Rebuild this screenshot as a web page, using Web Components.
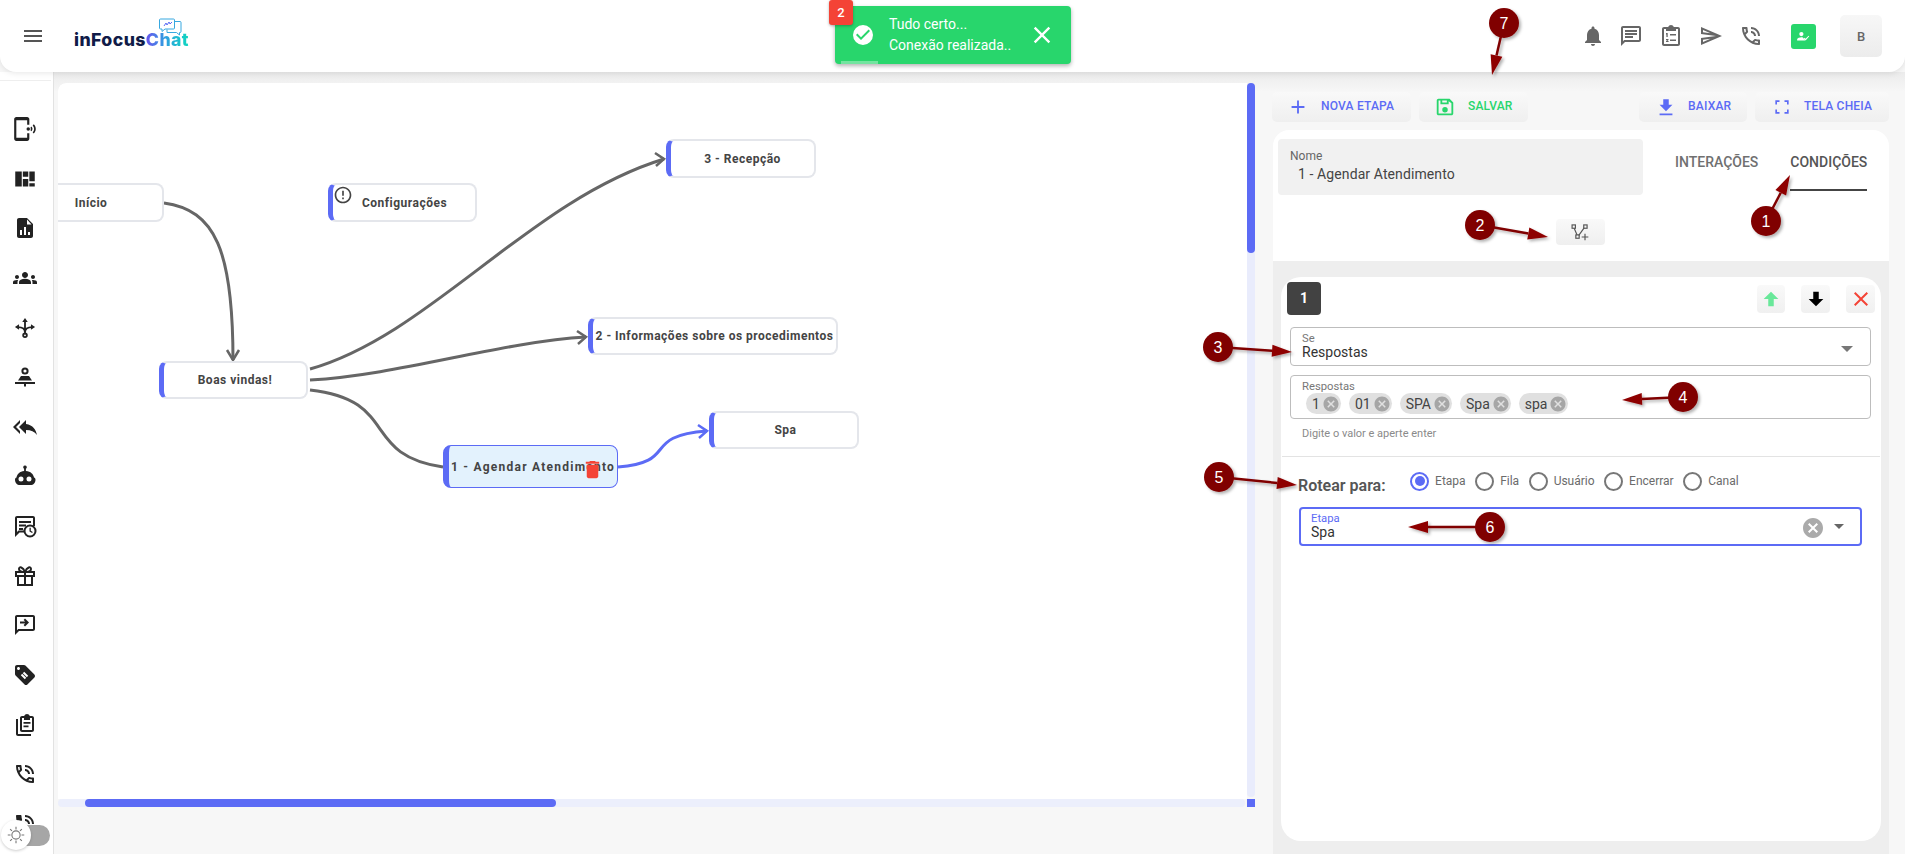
<!DOCTYPE html>
<html lang="pt-BR"><head><meta charset="utf-8"><title>inFocusChat</title>
<style>
html,body{margin:0;height:854px;overflow:hidden;background:#f7f7f7;font-family:Roboto,"Liberation Sans",sans-serif}
app-shell{display:block}
</style></head><body>
<app-shell>
  <top-bar slot="top"></top-bar>
  <side-nav slot="side"></side-nav>
  <flow-canvas slot="canvas">
    <flow-node x="15" y="183" w="149" h="39" plain>Início</flow-node>
    <flow-node x="328" y="183" w="149" h="39" warn>Configurações</flow-node>
    <flow-node x="666" y="139" w="150" h="39">3 - Recepção</flow-node>
    <flow-node x="588" y="317" w="250" h="38">2 - Informações sobre os procedimentos</flow-node>
    <flow-node x="159" y="361" w="149" h="38">Boas vindas!</flow-node>
    <flow-node x="709" y="411" w="150" h="38">Spa</flow-node>
    <flow-node x="443" y="445" w="175" h="43" active>1 - Agendar Atendimento</flow-node>
  </flow-canvas>
  <step-panel slot="panel"></step-panel>
  <toast-note slot="toast"></toast-note>
  <anno-layer slot="anno"></anno-layer>
</app-shell>
<script>
const PRIMARY='#5c6bf5';
const I={
menu:'<path d="M3 18h18v-2H3v2zm0-5h18v-2H3v2zm0-7v2h18V6H3z"/>',
phonering:'<path d="M20.1 7.7l-1 1c1.8 1.8 1.8 4.6 0 6.5l1 1c2.5-2.3 2.5-6.1 0-8.5zM18 9.8l-1 1c.5.7.5 1.6 0 2.3l1 1c1.2-1.2 1.2-3 0-4.3zM14 1H4c-1.1 0-2 .9-2 2v18c0 1.1.9 2 2 2h10c1.1 0 2-.9 2-2v-5h-2v4H4V4h10v4h2V3c0-1.1-.9-2-2-2z"/><circle cx="15" cy="12" r="1.6"/>',
quilt:'<path d="M3 5h6v14H3zM10 5h5v5h-5zM10 12h5v7h-5zM16 5h5v9h-5zM16 16h5v3h-5z"/>',
report:'<path fill-rule="evenodd" d="M14 2H6c-1.1 0-2 .9-2 2v16c0 1.1.9 2 2 2h12c1.1 0 2-.9 2-2V8l-6-6zM7 19v-5h2v5H7zm4 0v-8h2v8h-2zm4 0v-3h2v3h-2zM14 8.5V3.5L18.500 8.500H14z"/>',
groups:'<path d="M12 12.75c1.63 0 3.07.39 4.24.9 1.08.48 1.76 1.56 1.76 2.73V18H6v-1.61c0-1.18.68-2.26 1.76-2.73 1.17-.52 2.61-.91 4.24-.91zM4 13c1.1 0 2-.9 2-2s-.9-2-2-2-2 .9-2 2 .9 2 2 2zm1.130 1.100c-.37-.06-.74-.1-1.130-.1-.99 0-1.930.21-2.780.58C.48 14.900 0 15.620 0 16.430V18h4.500v-1.610c0-.83.23-1.610.63-2.290zM20 13c1.100 0 2-.9 2-2s-.9-2-2-2-2 .9-2 2 .9 2 2 2zm4 3.430c0-.81-.48-1.530-1.220-1.850-.85-.37-1.790-.58-2.780-.58-.39 0-.76.04-1.130.1.4.68.63 1.460.63 2.290V18H24v-1.570zM12 6c1.660 0 3 1.340 3 3s-1.340 3-3 3-3-1.340-3-3 1.340-3 3-3z"/>',
fork:'<g fill="none" stroke="currentColor" stroke-width="2"><circle cx="12" cy="20" r="2"/><path d="M12 18V5M12 17c0-5-3-6-8-6M12 17c0-5 3-6 8-6"/></g><path d="M12 1l3 4.500H9zM1 11l4.500-3v6zM23 11l-4.500-3v6z"/>',
seat:'<g fill="none" stroke="currentColor" stroke-width="2"><circle cx="12" cy="6" r="2.600"/></g><path d="M8 11h8l3 4.500H5zM2 17h20v2H13v2.500h-2V19H2z"/>',
replyall:'<path d="M7 8V5l-7 7 7 7v-3l-4-4 4-4zm6 1V5l-7 7 7 7v-4.100c5 0 8.500 1.600 11 5.100-1-5-4-10-11-11z"/>',
robot:'<path fill-rule="evenodd" d="M12 1.500a1.800 1.800 0 0 1 .9 3.360V7c4.800.4 7.600 3.200 8.100 6.500.9.300 1.500 1.100 1.500 2.200 0 3-2 5.300-5 5.300H7c-3 0-5-2.300-5-5.300 0-1.100.6-1.900 1.500-2.200.5-3.300 3.300-6.100 7.600-6.500V4.860A1.800 1.800 0 0 1 12 1.500zM8 12.500a2.500 2.500 0 1 0 0 5 2.500 2.500 0 0 0 0-5zm8 0a2.500 2.500 0 1 0 0 5 2.500 2.500 0 0 0 0-5z"/>',
sched:'<path fill-rule="evenodd" d="M4 2h16c1.100 0 2 .9 2 2v8h-2V4H4v14l1.500-1.500H11v2H6.500L2 23V4c0-1.100.9-2 2-2zM6 7h12v2H6zM6 10.500h7v2H6zM6 14h4v2H6z"/><circle cx="17" cy="17" r="5.500" fill="none" stroke="currentColor" stroke-width="2"/><path d="M16.500 13.800h1.300v3l2 1.300-.7 1-2.600-1.700z"/>',
gift:'<g fill="none" stroke="currentColor" stroke-width="2"><path d="M3 8h18v4H3zM5 12v9h14v-9M12 8v13M12 8C10 3 6 2 6 5c0 2 3 3 6 3 3 0 6-1 6-3 0-3-4-2-6 3z"/></g>',
inbox:'<path d="M20 2H4c-1.100 0-2 .9-2 2v18l4-4h14c1.100 0 2-.9 2-2V4c0-1.100-.9-2-2-2zm0 14H5.170L4 17.170V4h16v12z"/><path d="M12 5.500l-1.400 1.400L12.200 8.500H7v2h5.200l-1.600 1.600L12 13.500l4-4z"/>',
tag:'<path fill-rule="evenodd" d="M21.410 11.580l-9-9C12.050 2.220 11.550 2 11 2H4c-1.100 0-2 .9-2 2v7c0 .55.22 1.050.59 1.420l9 9c.36.36.86.58 1.410.58.55 0 1.050-.22 1.410-.59l7-7c.37-.36.59-.86.59-1.410 0-.55-.23-1.060-.59-1.420zM5.500 7C4.670 7 4 6.330 4 5.500S4.670 4 5.500 4 7 4.670 7 5.500 6.330 7 5.500 7zM9.800 10.200l1.400-1.400 4 4-1.400 1.400zM7.800 12.200l1.400-1.400 4 4-1.400 1.400z"/>',
clips:'<path fill-rule="evenodd" d="M3 6h2v15h13v2H5c-1.100 0-2-.9-2-2zM9 3h2.200c.4-1.200 1.500-2 2.800-2s2.400.8 2.800 2H19c1.100 0 2 .9 2 2v12c0 1.100-.9 2-2 2H9c-1.100 0-2-.9-2-2V5c0-1.100.9-2 2-2zm0 2v12h10V5h-2v2h-6V5zM10.500 9h7v1.800h-7zM10.500 12.500h5v1.800h-5z"/>',
talk:'<path d="M15 12h2c0-2.760-2.240-5-5-5v2c1.660 0 3 1.340 3 3zm4 0h2c0-4.970-4.030-9-9-9v2c3.870 0 7 3.130 7 7zm1 3.500c-1.250 0-2.450-.2-3.570-.57-.1-.03-.21-.05-.31-.05-.26 0-.51.1-.71.29l-2.200 2.200c-2.830-1.440-5.150-3.750-6.590-6.590l2.200-2.210c.28-.26.36-.65.25-1C8.700 6.450 8.500 5.250 8.500 4c0-.55-.45-1-1-1H4c-.55 0-1 .45-1 1 0 9.390 7.610 17 17 17 .55 0 1-.45 1-1v-3.500c0-.55-.45-1-1-1zM5.030 5h1.500c.07.88.22 1.750.45 2.580l-1.200 1.210c-.4-1.210-.66-2.470-.75-3.790zM19 18.970c-1.320-.09-2.600-.35-3.800-.76l1.200-1.200c.85.24 1.720.39 2.600.45v1.510z"/>',
talkfill:'<path d="M20 15.500c-1.250 0-2.450-.2-3.570-.57-.35-.11-.74-.03-1.020.24l-2.200 2.200c-2.830-1.440-5.150-3.750-6.590-6.590l2.200-2.210c.28-.26.36-.65.25-1C8.700 6.450 8.500 5.250 8.500 4c0-.55-.45-1-1-1H4c-.55 0-1 .45-1 1 0 9.390 7.610 17 17 17 .55 0 1-.45 1-1v-3.500c0-.55-.45-1-1-1zM19 12h2c0-4.970-4.030-9-9-9v2c3.870 0 7 3.130 7 7zm-4 0h2c0-2.760-2.240-5-5-5v2c1.660 0 3 1.340 3 3z"/>',
sun:'<g fill="none" stroke="currentColor" stroke-width="1.200"><circle cx="12" cy="12" r="4.500"/><path d="M12 3v3M12 18v3M3 12h3M18 12h3M5.600 5.600l2 2M16.400 16.400l2 2M18.400 5.600l-2 2M7.600 16.400l-2 2"/></g>',
bell:'<path d="M12 22c1.100 0 2-.9 2-2h-4c0 1.100.89 2 2 2zm6-6v-5c0-3.070-1.640-5.640-4.500-6.320V4c0-.83-.67-1.500-1.500-1.500s-1.500.67-1.500 1.500v.68C7.630 5.360 6 7.920 6 11v5l-2 2v1h16v-1l-2-2z"/>',
chat:'<path d="M20 2H4c-1.100 0-2 .9-2 2v18l4-4h14c1.100 0 2-.9 2-2V4c0-1.100-.9-2-2-2zm0 14H5.170L4 17.170V4h16v12zM6 12h8v2H6zm0-3h12v2H6zm0-3h12v2H6z"/>',
clipnum:'<path fill-rule="evenodd" d="M5 3h4.200C9.600 1.800 10.700 1 12 1s2.400.8 2.800 2H19c1.100 0 2 .9 2 2v15c0 1.100-.9 2-2 2H5c-1.100 0-2-.9-2-2V5c0-1.100.9-2 2-2zm0 2v15h14V5h-2v2H7V5zM7 9h1.700v4H7.400v-2.600H7zM7 15h2.500v1.100L8.300 17h1.300v1H7v-1l1.300-1H7zM11 10h6v1.600h-6zM11 15.500h6v1.600h-6z"/>',
send:'<path d="M4.010 6.030l7.510 3.220-7.520-1 .01-2.220m7.500 8.720L4 17.970v-2.220l7.510-1M2.010 3L2 10l15 2-15 2 .01 7L23 12 2.010 3z"/>',
howto:'<path d="M9 11.500a3 3 0 1 0 0-6 3 3 0 0 0 0 6zM3 17.500v-1.500c0-2 4-3 6-3 .7 0 1.400.1 2.100.3l1.200 1.400 1 1.200 1.100 1.600zM15 17.500l-2.500-2.800 1-1 1.500 1.500 4.100-4.400 1 1z"/>',
plus:'<path d="M19 13h-6v6h-2v-6H5v-2h6V5h2v6h6v2z"/>',
save:'<path fill-rule="evenodd" d="M17 3H5c-1.110 0-2 .9-2 2v14c0 1.100.89 2 2 2h14c1.100 0 2-.9 2-2V7l-4-4zM5 5h2v4h9V5.830L19 8v11H5V5zM9 5h5v2H9zm3 7a3 3 0 1 0 0 6 3 3 0 0 0 0-6z"/>',
download:'<path d="M19 9.500h-4v-6H9v6H5l7 7 7-7zM5 19v2h14v-2H5z"/>',
full:'<path d="M4 4h5v2H6v3H4zM15 4h5v5h-2V6h-3zM18 15h2v5h-5v-2h3zM4 15h2v3h3v2H4z"/>',
branch:'<g fill="none" stroke="currentColor" stroke-width="1.400"><rect x="2.500" y="3.500" width="4" height="4"/><rect x="16.500" y="3.500" width="4" height="4"/><rect x="7" y="15.500" width="4" height="4"/><path d="M5 7.500l3.500 8M17 7l-6.500 9M18 14v8M14 18h8"/></g>',
up:'<path d="M4 12l8-8 8 8h-5v8H9v-8z"/>',
down:'<path d="M4 12l8 8 8-8h-5V4H9v8z"/>',
close:'<path d="M19 6.410 17.590 5 12 10.590 6.410 5 5 6.410 10.590 12 5 17.590 6.410 19 12 13.410 17.590 19 19 17.590 13.410 12z"/>',
trash:'<path d="M6 19c0 1.100.9 2 2 2h8c1.100 0 2-.9 2-2V7H6v12zM19 4h-3.500l-1-1h-5l-1 1H5v2h14V4z"/>',
erroro:'<path d="M11 15h2v2h-2zm0-8h2v6h-2zm.99-5C6.470 2 2 6.480 2 12s4.470 10 9.990 10C17.520 22 22 17.520 22 12S17.520 2 11.990 2zM12 20c-4.420 0-8-3.580-8-8s3.580-8 8-8 8 3.580 8 8-3.580 8-8 8z"/>',
okcircle:'<path fill-rule="evenodd" d="M12 2a10 10 0 1 0 0 20 10 10 0 0 0 0-20zm-2 15-5-5 1.410-1.410L10 14.170l7.590-7.590L19 8z"/>',
cancel:'<path d="M12 2C6.470 2 2 6.470 2 12s4.470 10 10 10 10-4.470 10-10S17.530 2 12 2zm5 13.590L15.590 17 12 13.410 8.410 17 7 15.590 10.590 12 7 8.410 8.410 7 12 10.590 15.590 7 17 8.410 13.410 12 17 15.590z"/>'
};
function el(name,css,html){
  class C extends HTMLElement{
    constructor(){super();const r=this.attachShadow({mode:'open'});
      r.innerHTML='<style>'+css+'</style>'+(typeof html==='function'?html(this):html);}
  }
  customElements.define(name,C);
}
class XIcon extends HTMLElement{
  connectedCallback(){
    if(this.shadowRoot)return;
    const s=this.getAttribute('size')||24,c=this.getAttribute('color')||'currentColor';
    const r=this.attachShadow({mode:'open'});
    r.innerHTML=`<style>:host{display:inline-flex;flex:none;color:${c};width:${s}px;height:${s}px}svg{display:block}</style><svg width="${s}" height="${s}" viewBox="0 0 24 24" fill="currentColor">${I[this.getAttribute('name')]||''}</svg>`;
  }
}
customElements.define('x-icon',XIcon);

el('app-shell',`
:host{display:block;position:relative;width:1905px;height:854px;overflow:hidden;background:#f7f7f7}
.top{position:relative;z-index:5}
.row{display:flex;height:782px;background:linear-gradient(#ebebeb,#f7f7f7 20px)}
.side{flex:none}
.main{display:flex;flex:1;padding:11px 16px 0 4px;gap:17px;min-width:0}
`,`<div class="top"><slot name="top"></slot></div>
<div class="row"><div class="side"><slot name="side"></slot></div>
<div class="main"><slot name="canvas"></slot><slot name="panel"></slot></div></div>
<slot name="toast"></slot><slot name="anno"></slot>`);

el('top-bar',`
:host{display:flex;align-items:center;height:72px;background:#fff;border-radius:0 0 16px 16px;box-shadow:0 1px 6px rgba(0,0,0,.1);box-sizing:border-box;padding:0 23px 0 21px;color:#666}
.logo{position:relative;margin-left:29px;margin-top:7px;font:800 17.700px/20px Inter,Roboto,sans-serif;letter-spacing:.4px;color:#101b48;white-space:nowrap}
.logo b{font-weight:800;background:linear-gradient(90deg,#6a55ee,#2f9fe0 45%,#0ed8bf);-webkit-background-clip:text;background-clip:text;color:transparent}
.logo svg{position:absolute;left:85px;top:-12px}
.sp{flex:1}
.ics{display:flex;align-items:center;gap:16px;margin-right:28px}
.g{width:25px;height:25px;background:#28d66c;border-radius:3px;display:flex;align-items:center;justify-content:center;margin-right:24px}
.a{width:42px;height:42px;border-radius:5px;background:linear-gradient(#f7f7f7,#ececec);display:flex;align-items:center;justify-content:center;font:500 13px Roboto,sans-serif;color:#666}
`,`<x-icon name="menu" size="24" color="#555"></x-icon>
<div class="logo">inFocus<b>Chat</b><svg width="24" height="20" viewBox="0 0 24 20" fill="none" stroke="#37a8e0" stroke-width="1"><path d="M1.500 1h13q1 0 1 1v8q0 1-1 1H6l-3 2.500V11H1.500q-1 0-1-1V2q0-1 1-1z" fill="#fff"/><path d="M16 3.500h5q1 0 1 1v9q0 1-1 1h-.5v2.500l-3-2.500H8v-3"/><path d="M5 8l2-3 1 2 2-3 1 2 2-2" stroke="#5c6bf5"/></svg></div>
<span class="sp"></span>
<div class="ics"><x-icon name="bell" size="24" style="margin-right:-2px"></x-icon><x-icon name="chat" size="24"></x-icon><x-icon name="clipnum" size="24"></x-icon><x-icon name="send" size="24"></x-icon><x-icon name="talk" size="24"></x-icon></div>
<div class="g"><x-icon name="howto" size="17" color="#fff"></x-icon></div>
<div class="a">B</div>`);

const NAV=[['phonering',26],['quilt',26],['report',24],['groups',24],['fork',22],['seat',24],['replyall',24],['robot',24],['sched',24],['gift',24],['inbox',24],['tag',24],['clips',24],['talk',24],['talkfill',24]];
el('side-nav',`
:host{display:block;width:53px;height:782px;background:#fff;border-right:1px solid #e2e2e2;position:relative;overflow:hidden}
.line{height:1px;background:#eee;margin:8px 2px 0 0}
.list{display:flex;flex-direction:column;padding:23.200px 3px 0 0;color:#222}
.list div{display:flex;align-items:center;justify-content:center;height:49.650px;flex:none}
`,`<div class="line"></div><div class="list">
${NAV.map(([n,s])=>`<div><x-icon name="${n}" size="${s}"></x-icon></div>`).join('')}
</div><theme-toggle></theme-toggle>`);

el('theme-toggle',`
:host{position:absolute;left:1px;bottom:4px;width:49px;height:30px;display:block}
.t{position:absolute;left:22px;top:5px;width:27px;height:21px;background:#a6a6a6;border-radius:0 11px 11px 0}
.k{position:absolute;left:0;top:0;width:30px;height:30px;border-radius:50%;background:#fff;box-shadow:0 1px 3px rgba(0,0,0,.2);display:flex;align-items:center;justify-content:center}
`,`<div class="t"></div><div class="k"><x-icon name="sun" size="22" color="#777"></x-icon></div>`);

el('flow-canvas',`
:host{display:block;flex:none;position:relative;width:1197px;height:727px;overflow:hidden;border-radius:8px 0 0 0}
.bg{position:absolute;left:0;top:0;width:1189px;height:716px;background:#fff;border-radius:8px 0 0 0;overflow:hidden}
.world{position:absolute;left:-58px;top:-83px;width:1905px;height:854px}
svg{position:absolute;left:0;top:0}
.vt{position:absolute;left:1189px;top:0;width:8px;height:714px;background:#e9ecfc;border-radius:4px}
.vb{position:absolute;left:0;top:0;width:100%;height:170px;background:${PRIMARY};border-radius:4px}
.ht{position:absolute;left:0;top:716px;width:1187px;height:8px;background:#eceffc;border-radius:4px}
.hb{position:absolute;left:27px;top:0;width:471px;height:100%;background:${PRIMARY};border-radius:4px}
.cn{position:absolute;left:1189px;top:716px;width:8px;height:8px;background:${PRIMARY}}
`,`<div class="bg"><div class="world">
<svg width="1905" height="854" fill="none" stroke="#666" stroke-width="3">
<path d="M164 203C215 210 233 250 233 360"/><path d="M227 350l6 10 6-10" stroke-width="2.500"/>
<path d="M310 369C430 335 530 200 664 159"/><path d="M655 153l9 6-8 7" stroke-width="2.500"/>
<path d="M310 380C400 375 500 342 586 337"/><path d="M577 331l9 6-8 7" stroke-width="2.500"/>
<path d="M310 390C400 400 360 455 443 467"/>
<path d="M618 467C680 462 640 436 707 431" stroke="${PRIMARY}"/><path d="M698 425l9 6-8 7" stroke="${PRIMARY}" stroke-width="2.500"/>
</svg>
<slot></slot>
</div></div>
<div class="vt"><div class="vb"></div></div>
<div class="ht"><div class="hb"></div></div><div class="cn"></div>`);

class FlowNode extends HTMLElement{
  connectedCallback(){
    if(this.shadowRoot)return;
    const g=a=>this.getAttribute(a);
    const act=this.hasAttribute('active'),warn=this.hasAttribute('warn');
    const r=this.attachShadow({mode:'open'});
    r.innerHTML=`<style>
:host{position:absolute;left:${g('x')}px;top:${g('y')}px;width:${g('w')}px;height:${g('h')}px;display:flex;align-items:center;justify-content:center;box-sizing:border-box;
background:${act?'#e3f2fd':'#fff'};border:${act?'1px solid '+PRIMARY:'2px solid #e4e6eb'};border-left:${act?'6px':'5px'} solid ${PRIMARY};border-radius:8px;
font:700 12px Roboto,sans-serif;letter-spacing:${act?'1.240px':'.5px'};color:#444;white-space:nowrap;${warn?'padding-left:1px;':''}}
x-icon{position:absolute}
.w{left:0;top:0}.t{left:131.500px;top:11.500px}
</style><slot></slot>${warn?'<x-icon class="w" name="erroro" size="20" color="#444"></x-icon>':''}${act?'<x-icon class="t" name="trash" size="23" color="#f44336"></x-icon>':''}`;
  }
}
customElements.define('flow-node',FlowNode);

el('tool-button',`
:host{display:inline-flex;align-items:center;height:30px;box-sizing:border-box;background:linear-gradient(#f9f9f9,#efefef);border-radius:5px;font:500 12px Roboto,sans-serif;letter-spacing:.2px;white-space:nowrap}
span{position:relative;top:-1px}
`,`<slot name="i"></slot><span><slot></slot></span>`);

el('step-panel',`
:host{display:flex;flex-direction:column;flex:none;width:617px;padding-top:9px;height:771px;box-sizing:border-box}
.bar{display:flex;height:30px;gap:8px;margin-bottom:8px}
.sp{flex:1}
tool-button{color:${PRIMARY};width:var(--w);padding-left:var(--p);gap:var(--g);flex:none}
.c{flex:1;background:#fff;border-radius:16px 16px 0 0;display:flex;flex-direction:column;margin-left:1px;min-height:0}
.h{display:flex;padding:9px 5px 0;height:56px}
.n{width:365px;height:56px;box-sizing:border-box;background:#f1f1f1;border-radius:4px;padding:10px 12px;color:#666;font:12px/14px Roboto,sans-serif}
.n div{font-size:14px;line-height:18px;margin:2px 0 0 8px;color:#444;letter-spacing:.1px}
.tabs{display:flex;gap:32px;margin-left:32px;font:500 14px Roboto,sans-serif;color:#707070;padding-top:15px}
.tabs span{height:35px;box-sizing:content-box}
.tabs .on{border-bottom:2px solid #444;color:#555}
.ib{display:flex;justify-content:center;height:26px;margin:24px 0 16px}
.ib div{margin-left:-2px;width:49px;height:26px;background:linear-gradient(#f9f9f9,#efefef);border-radius:4px;display:flex;align-items:center;justify-content:center}
.g{flex:1;background:#eee;padding:16px 8px 13px;min-height:0;display:flex}
`,`<div class="bar">
<tool-button style="--w:139px;--p:15px;--g:12px"><x-icon slot="i" name="plus" size="22"></x-icon>NOVA ETAPA</tool-button>
<tool-button style="--w:109px;--p:15px;--g:12px;color:#28d66c"><x-icon slot="i" name="save" size="22"></x-icon>SALVAR</tool-button>
<span class="sp"></span>
<tool-button style="--w:108px;--p:16px;--g:11px"><x-icon slot="i" name="download" size="22"></x-icon>BAIXAR</tool-button>
<tool-button style="--w:134px;--p:17px;--g:12px"><x-icon slot="i" name="full" size="20"></x-icon>TELA CHEIA</tool-button>
</div>
<div class="c">
<div class="h"><div class="n">Nome<div>1 - Agendar Atendimento</div></div>
<div class="tabs"><span>INTERAÇÕES</span><span class="on">CONDIÇÕES</span></div></div>
<div class="ib"><div><x-icon name="branch" size="20" color="#555"></x-icon></div></div>
<div class="g"><condition-card></condition-card></div>
</div>`);

el('mini-btn',`
:host{display:flex;align-items:center;justify-content:center;width:29px;height:28px;background:linear-gradient(#f9f9f9,#f0f0f0);border-radius:4px}
`,`<slot></slot>`);

el('condition-card',`
:host{display:block;flex:1;background:#fff;border-radius:20px;box-sizing:border-box;padding:5px 10px 0 9px}
.top{display:flex;align-items:center;height:33px;margin:0 -4px 12px 0}
.num{width:34px;height:33px;margin-left:-3px;background:#424242;border-radius:4px;color:#fff;font:700 14px/33px Roboto,sans-serif;text-align:center}
.sp{flex:1}
.top mini-btn{margin-left:16px}
.f{display:block;position:relative;box-sizing:border-box;border:1px solid #bdbdbd;border-radius:4px;padding:4px 11px 0;color:#333}
.l{font:11.250px/13px Roboto,sans-serif;color:#777}
.v{font:14px/16px Roboto,sans-serif;color:#333;margin-top:-1px}
.car{position:absolute;width:0;height:0;border:6px solid transparent;border-top-color:#777;border-bottom:0}
.se{height:39px;margin-bottom:9px}
.se .car{right:17px;top:18px}
.re{height:44px}
.chips{display:flex;gap:8px;margin:0 0 0 4px}
.hint{font:11px/13px Roboto,sans-serif;color:#8a8a8a;margin:8px 0 16px 12px}
hr{border:0;border-top:1px solid #e3e3e3;margin:0 -9px 0 -8px}
.rt{display:flex;align-items:center;height:38px;margin:5px 0 7px 8px;gap:24.500px}
.rt b{font:600 16px Roboto,sans-serif;color:#555;position:relative;top:4px}
.rs{display:flex;gap:9.500px;position:relative}
.et{height:39px;margin:0 9px;border:2px solid ${PRIMARY};padding:3px 10px 0}
.et .l{color:${PRIMARY}}
.et x-icon{position:absolute;left:499.500px;top:7px}
.et .car{right:16px;top:15px;border-width:5.500px;border-bottom:0;border-top-color:#666}
`,`<div class="top"><div class="num">1</div><span class="sp"></span>
<mini-btn style="width:28px"><x-icon name="up" size="22" color="#69e89a"></x-icon></mini-btn>
<mini-btn><x-icon name="down" size="22" color="#000"></x-icon></mini-btn>
<mini-btn><x-icon name="close" size="24" color="#f44336"></x-icon></mini-btn></div>
<div class="f se"><div class="l">Se</div><div class="v">Respostas</div><span class="car"></span></div>
<div class="f re"><div class="l">Respostas</div><div class="chips"><chip-tag>1</chip-tag><chip-tag>01</chip-tag><chip-tag>SPA</chip-tag><chip-tag>Spa</chip-tag><chip-tag>spa</chip-tag></div></div>
<div class="hint">Digite o valor e aperte enter</div><hr>
<div class="rt"><b>Rotear para:</b><div class="rs"><radio-opt on>Etapa</radio-opt><radio-opt>Fila</radio-opt><radio-opt>Usuário</radio-opt><radio-opt>Encerrar</radio-opt><radio-opt>Canal</radio-opt></div></div>
<div class="f et"><div class="l">Etapa</div><div class="v">Spa</div><x-icon name="cancel" size="24" color="#aaa"></x-icon><span class="car"></span></div>`);

el('chip-tag',`
:host{display:inline-flex;align-items:center;height:21px;background:#e0e0e0;border-radius:11px;padding:0 1px 0 6px;font:14px Roboto,sans-serif;color:#444;gap:2px}
`,`<slot></slot><x-icon name="cancel" size="18" color="#a6a6a6"></x-icon>`);

class RadioOpt extends HTMLElement{
  connectedCallback(){
    if(this.shadowRoot)return;
    const on=this.hasAttribute('on');
    const r=this.attachShadow({mode:'open'});
    r.innerHTML=`<style>:host{display:inline-flex;align-items:center;gap:6px;font:12px Roboto,sans-serif;color:#6b6b6b}
i{display:block;width:19px;height:19px;box-sizing:border-box;border:2px solid ${on?PRIMARY:'#777'};border-radius:50%;position:relative}
i::after{content:"";display:${on?'block':'none'};position:absolute;inset:2.500px;border-radius:50%;background:${PRIMARY}}</style><i></i><slot></slot>`;
  }
}
customElements.define('radio-opt',RadioOpt);

el('toast-note',`
:host{position:absolute;z-index:8;left:835px;top:6px;width:236px;height:58px;background:#28d66c;border-radius:4px;box-shadow:0 2px 4px rgba(0,0,0,.3);color:#fff;display:flex;align-items:center;box-sizing:border-box;padding-left:16px;font:14px/21px Roboto,sans-serif}
.b{position:absolute;left:-6px;top:-6px;width:24px;height:25px;background:#f44336;border-radius:3px;text-align:center;font:500 13px/25px Roboto,sans-serif;box-shadow:0 1px 3px rgba(0,0,0,.3)}
.t{margin-left:14px;flex:1;white-space:nowrap}
.x{margin-right:15px}
.p{position:absolute;left:6px;bottom:0;width:37px;height:3px;background:rgba(255,255,255,.35)}
`,`<span class="b">2</span><x-icon name="okcircle" size="24"></x-icon><div class="t">Tudo certo...<br>Conexão realizada..</div><x-icon class="x" name="close" size="28"></x-icon><div class="p"></div>`);

const MARKS=[['7',1504,23,1492,75],['1',1766,221,1790,175],['2',1480,225,1548,237],['3',1218,347,1292,352],['4',1683,397,1622,400],['5',1219,477,1297,485],['6',1490,527,1408,527]];
el('anno-layer',`
:host{position:absolute;z-index:9;left:0;top:0;width:1905px;height:854px;pointer-events:none;display:block}
svg{display:block}
text{font:16px "Liberation Sans",Arial,sans-serif;fill:#fff;text-anchor:middle}
`,()=>{
  const parts=MARKS.map(([n,cx,cy,tx,ty])=>{
    const a=Math.atan2(ty-cy,tx-cx),c=Math.cos(a),s=Math.sin(a);
    const bx=tx-20*c,by=ty-20*s;
    return `<g filter="url(#sh)"><line x1="${cx}" y1="${cy}" x2="${bx}" y2="${by}" stroke="#800000" stroke-width="2.500"/><polygon points="${tx},${ty} ${bx-6*s},${by+6*c} ${bx+6*s},${by-6*c}" fill="#8e0000"/><circle cx="${cx}" cy="${cy}" r="15" fill="#800000"/></g><text x="${cx}" y="${cy+6}">${n}</text>`;
  }).join('');
  return `<svg width="1905" height="854"><defs><filter id="sh" x="-30%" y="-30%" width="160%" height="160%"><feDropShadow dx="2" dy="2" stdDeviation="1.500" flood-color="#000" flood-opacity=".3"/></filter></defs>${parts}</svg>`;
});
</script>
</body></html>
